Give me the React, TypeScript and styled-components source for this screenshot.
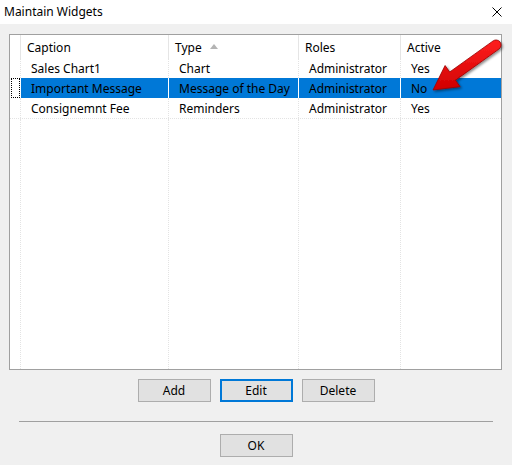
import styled, { createGlobalStyle } from "styled-components"

type Widget = {
  caption: string
  type: string
  roles: string
  active: string
}

const WIDGETS: Widget[] = [
  { caption: "Sales Chart1", type: "Chart", roles: "Administrator", active: "Yes" },
  { caption: "Important Message", type: "Message of the Day", roles: "Administrator", active: "No" },
  { caption: "Consignemnt Fee", type: "Reminders", roles: "Administrator", active: "Yes" },
]

const SELECTED = 1
const BLUE = "#0078d7"
const GRID = "#e3e3e3"
const COLUMNS = "10px 148px 130px 102px 1fr"

const GlobalStyle = createGlobalStyle`
  html, body {
    margin: 0;
    padding: 0;
    background: #f0f0f0;
  }
  body {
    font-family: "Noto Sans", "Liberation Sans", sans-serif;
    font-size: 12px;
    color: #000;
  }
`

export default function App() {
  return (
    <>
      <GlobalStyle />
      <Dialog>
        <TitleBar>
          <Title>Maintain Widgets</Title>
          <CloseButton aria-label="Close">
            <svg width="10" height="10" viewBox="0 0 10 10">
              <path d="M0.5 0.5 L9.5 9.5 M9.5 0.5 L0.5 9.5" stroke="#000" strokeWidth="1" />
            </svg>
          </CloseButton>
        </TitleBar>

        <Content>
          <ListBox>
            <HeaderRow>
              <Indicator />
              <HeaderCell>Caption</HeaderCell>
              <HeaderCell>
                Type
                <SortArrow />
              </HeaderCell>
              <HeaderCell>Roles</HeaderCell>
              <HeaderCell>Active</HeaderCell>
            </HeaderRow>

            {WIDGETS.map((w, i) => (
              <Row key={w.caption} $last={i === WIDGETS.length - 1}>
                <Indicator>{i === SELECTED && <FocusMark />}</Indicator>
                <Cell $selected={i === SELECTED}>{w.caption}</Cell>
                <Cell $selected={i === SELECTED}>{w.type}</Cell>
                <Cell $selected={i === SELECTED}>{w.roles}</Cell>
                <Cell $selected={i === SELECTED}>{w.active}</Cell>
              </Row>
            ))}

            <Filler>
              <Indicator />
              <Cell />
              <Cell />
              <Cell />
              <Cell />
            </Filler>
          </ListBox>

          <ButtonRow>
            <Button>Add</Button>
            <Button $focused>Edit</Button>
            <Button>Delete</Button>
          </ButtonRow>

          <Divider />

          <ButtonRow $bottom>
            <Button>OK</Button>
          </ButtonRow>
        </Content>

        <Pointer width="90" height="70" viewBox="425 32 90 70">
          <defs>
            <linearGradient id="arrowFill" x1="0" y1="0" x2="0" y2="1">
              <stop offset="0" stopColor="#ff2020" />
              <stop offset="1" stopColor="#d00000" />
            </linearGradient>
            <filter id="arrowShadow" x="-20%" y="-20%" width="140%" height="140%">
              <feDropShadow dx="1.5" dy="1.5" stdDeviation="1" floodColor="#000" floodOpacity="0.45" />
            </filter>
          </defs>
          <path
            d="M433 90 L445.1 65.5 L449.7 72 L493.1 40.9 A5 5 0 0 1 498.9 49.1 L455.5 80.2 L460.1 86.7 Z"
            fill="url(#arrowFill)"
            stroke="#9a0000"
            strokeWidth="0.8"
            strokeLinejoin="round"
            filter="url(#arrowShadow)"
          />
        </Pointer>
      </Dialog>
    </>
  )
}

const Dialog = styled.div`
  position: relative;
  width: 512px;
  height: 465px;
  background: #f0f0f0;
  display: flex;
  flex-direction: column;
  overflow: hidden;
`

const TitleBar = styled.div`
  height: 24px;
  background: #fff;
  display: flex;
  align-items: center;
  justify-content: space-between;
  padding-left: 4px;
`

const Title = styled.span`
  font-size: 12px;
  color: #000;
  margin-top: -1px;
`

const CloseButton = styled.div`
  width: 30px;
  height: 24px;
  display: flex;
  align-items: center;
  justify-content: center;
  padding-left: 2px;
`

const Content = styled.div`
  flex: 1;
  display: flex;
  flex-direction: column;
  padding: 10px 10px 0 9px;
`

const ListBox = styled.div`
  height: 336px;
  box-sizing: border-box;
  border: 1px solid #a0a0a0;
  background: #fff;
  display: flex;
  flex-direction: column;
`

const GridRow = styled.div`
  display: grid;
  grid-template-columns: ${COLUMNS};
`

const HeaderRow = styled(GridRow)`
  height: 23px;
`

const Row = styled(GridRow)<{ $last?: boolean }>`
  height: 20px;
  box-sizing: content-box;
  border-bottom: ${(p) => (p.$last ? `1px dotted ${GRID}` : "none")};
`

const Filler = styled(GridRow)`
  flex: 1;
`

const Indicator = styled.div`
  position: relative;
`

const FocusMark = styled.div`
  position: absolute;
  left: 1px;
  top: 0;
  width: 9px;
  height: 20px;
  box-sizing: border-box;
  border: 1px dotted #000;
`

const HeaderCell = styled.div`
  display: flex;
  align-items: center;
  padding-left: 6px;
  padding-top: 1px;
  border-left: 1px solid #e5e5e5;
  white-space: nowrap;
`

const SortArrow = styled.span`
  display: inline-block;
  margin-left: 8px;
  margin-top: -2px;
  width: 0;
  height: 0;
  border-left: 4px solid transparent;
  border-right: 4px solid transparent;
  border-bottom: 5px solid #b4b4b4;
`

const Cell = styled.div<{ $selected?: boolean }>`
  padding-left: 10px;
  padding-top: 1px;
  line-height: 19px;
  white-space: nowrap;
  overflow: hidden;
  background: ${(p) => (p.$selected ? BLUE : "transparent")};
  border-left: 1px ${(p) => (p.$selected ? "solid #fff" : `dotted ${GRID}`)};
`

const ButtonRow = styled.div<{ $bottom?: boolean }>`
  display: flex;
  justify-content: center;
  gap: 9px;
  margin-top: ${(p) => (p.$bottom ? "12px" : "9px")};
  padding-left: 1px;
`

const Button = styled.div<{ $focused?: boolean }>`
  width: 73px;
  height: 23px;
  box-sizing: border-box;
  display: flex;
  align-items: center;
  justify-content: center;
  background: #e1e1e1;
  border: ${(p) => (p.$focused ? `2px solid ${BLUE}` : "1px solid #adadad")};
  font-size: 12px;
  color: #000;
`

const Divider = styled.div`
  height: 1px;
  margin: 19px 9px 0 10px;
  background: #a0a0a0;
`

const Pointer = styled.svg`
  position: absolute;
  left: 425px;
  top: 32px;
  pointer-events: none;
`
